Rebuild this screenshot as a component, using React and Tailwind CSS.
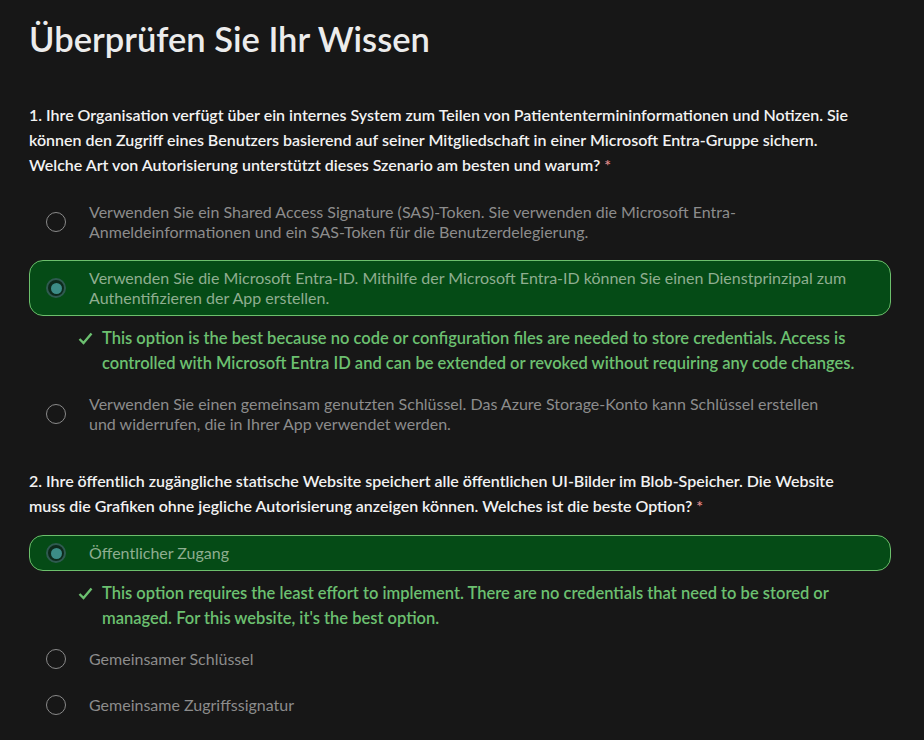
const QUESTIONS = [
  {
    id: 1,
    text: "1. Ihre Organisation verfügt über ein internes System zum Teilen von Patiententermininformationen und Notizen. Sie können den Zugriff eines Benutzers basierend auf seiner Mitgliedschaft in einer Microsoft Entra-Gruppe sichern. Welche Art von Autorisierung unterstützt dieses Szenario am besten und warum?",
    options: [
      {
        label:
          "Verwenden Sie ein Shared Access Signature (SAS)-Token. Sie verwenden die Microsoft Entra-Anmeldeinformationen und ein SAS-Token für die Benutzerdelegierung.",
      },
      {
        label:
          "Verwenden Sie die Microsoft Entra-ID. Mithilfe der Microsoft Entra-ID können Sie einen Dienstprinzipal zum Authentifizieren der App erstellen.",
        selected: true,
        feedback:
          "This option is the best because no code or configuration files are needed to store credentials. Access is controlled with Microsoft Entra ID and can be extended or revoked without requiring any code changes.",
      },
      {
        label:
          "Verwenden Sie einen gemeinsam genutzten Schlüssel. Das Azure Storage-Konto kann Schlüssel erstellen und widerrufen, die in Ihrer App verwendet werden.",
        width: "max-w-[740px]",
      },
    ],
  },
  {
    id: 2,
    text: "2. Ihre öffentlich zugängliche statische Website speichert alle öffentlichen UI-Bilder im Blob-Speicher. Die Website muss die Grafiken ohne jegliche Autorisierung anzeigen können. Welches ist die beste Option?",
    options: [
      {
        label: "Öffentlicher Zugang",
        selected: true,
        feedback:
          "This option requires the least effort to implement. There are no credentials that need to be stored or managed. For this website, it's the best option.",
      },
      { label: "Gemeinsamer Schlüssel" },
      { label: "Gemeinsame Zugriffssignatur" },
    ],
  },
];

function Radio({ checked }) {
  if (checked) {
    return (
      <span className="flex h-[20px] w-[20px] shrink-0 items-center justify-center rounded-full border-[2px] border-[#2f5a50] bg-[#0d2a1c]">
        <span className="h-[11px] w-[11px] rounded-full bg-[#3c8c86]" />
      </span>
    );
  }
  return <span className="h-[20px] w-[20px] shrink-0 rounded-full border border-[#8a8a8a]" />;
}

function Check() {
  return (
    <svg width="15" height="13" viewBox="0 0 15 13" className="mt-[6px] shrink-0">
      <path d="M1.5 7 L5.5 11 L13.5 1.5" fill="none" stroke="#6cc070" strokeWidth="2.4" />
    </svg>
  );
}

function Option({ option }) {
  return (
    <div>
      <div
        className={`flex items-center rounded-[14px] border py-[7px] pl-[16px] pr-[30px] ${
          option.selected ? "border-[#6cbf6c] bg-[#054b16] text-[#8fae90]" : "border-transparent text-[#8c8c8c]"
        }`}
      >
        <Radio checked={option.selected} />
        <span className={`ml-[23px] text-[16px] leading-[20px] ${option.width || ""}`}>{option.label}</span>
      </div>
      {option.feedback && (
        <div className="mt-[10px] flex gap-[9px] pl-[49px] pr-[30px]">
          <Check />
          <p className="text-[16.5px] font-semibold leading-[25px] text-[#6cc070]">{option.feedback}</p>
        </div>
      )}
    </div>
  );
}

export default function App() {
  return (
    <div
      className="min-h-screen bg-[#171717] pl-[29px] pr-[33px] pt-[18px] pb-[16px]"
      style={{ fontFamily: "Lato, 'Noto Sans', sans-serif" }}
    >
      <h1 className="text-[34.5px] font-semibold leading-[42px] text-[#ececec]">Überprüfen Sie Ihr Wissen</h1>

      <div className="mt-[42px] flex flex-col gap-[26px]">
        {QUESTIONS.map((q) => (
          <div key={q.id}>
            <p className="max-w-[830px] text-[16px] font-semibold leading-[25px] text-[#f2f2f2]">
              {q.text} <span className="text-[#e28b8b]">*</span>
            </p>
            <div className="mt-[17px] flex flex-col gap-[10px]">
              {q.options.map((o, i) => (
                <Option key={i} option={o} />
              ))}
            </div>
          </div>
        ))}
      </div>
    </div>
  );
}
